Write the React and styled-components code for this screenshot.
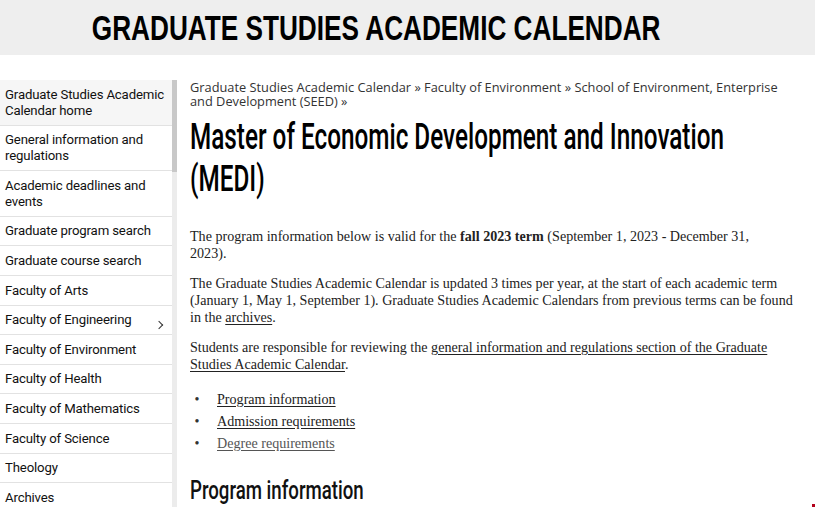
import React from "react";
import styled, { createGlobalStyle } from "styled-components";

const Global = createGlobalStyle`
  html, body { margin: 0; padding: 0; height: 100%; overflow: hidden; background: #fff; }
  body { font-family: "Liberation Serif", serif; color: #222; }
  * { box-sizing: border-box; }
`;

const Header = styled.header`
  height: 55px;
  background: #eeeeee;
  display: flex;
  align-items: center;
  justify-content: center;
  padding-right: 62px;
`;

const SiteTitle = styled.h1`
  margin: 0;
  font-family: "Liberation Sans", Arial, sans-serif;
  font-weight: 700;
  font-size: 35px;
  color: #000;
  transform: scaleX(0.748);
  white-space: nowrap;
`;

const Layout = styled.div`
  display: flex;
  align-items: flex-start;
  margin-top: 25px;
  gap: 13px;
`;

const SideNav = styled.nav`
  display: flex;
  flex: 0 0 177px;
`;

const NavList = styled.ul`
  list-style: none;
  margin: 0;
  padding: 0;
  width: 172px;
`;

const NavItem = styled.li`
  position: relative;
  padding: 6.6px 0 6px 5px;
  border-bottom: 1px solid #e2e2e2;
  background: ${p => (p.$active ? "#f6f6f6" : "#fff")};
  font-family: Roboto, "Liberation Sans", sans-serif;
  font-size: 13.2px;
  letter-spacing: -0.15px;
  line-height: 16px;
  color: #111;
`;

const Chevron = styled.span`
  position: absolute;
  right: 10px;
  top: 16px;
  width: 6px;
  height: 6px;
  border-right: 1.2px solid #333;
  border-bottom: 1.2px solid #333;
  transform: rotate(-45deg);
`;

const Track = styled.div`
  width: 5px;
  align-self: stretch;
  background: #ececec;
  min-height: 440px;
`;

const Thumb = styled.div`
  height: 92px;
  background: #c8c8c8;
`;

const Main = styled.main`
  flex: 1;
  min-width: 0;
  padding-right: 20px;
`;

const Crumbs = styled.div`
  font-family: "Open Sans", "Noto Sans", sans-serif;
  font-size: 12.8px;
  line-height: 14px;
  color: #333;
`;

const Title = styled.h1`
  margin: 8px 0 0 0;
  font-family: Roboto, "Liberation Sans", sans-serif;
  font-weight: 500;
  font-size: 36px;
  line-height: 42px;
  color: #000;
  transform-origin: left top;
  transform: scaleX(0.675);
  white-space: nowrap;
`;

const Para = styled.p`
  margin: ${p => p.$top || 0}px 0 0 0;
  font-size: 14.1px;
  line-height: 17px;
  color: #222;
  max-width: 605px;
`;

const Link = styled.a`
  color: ${p => (p.$visited ? "#555" : "#222")};
  text-decoration: underline;
  text-underline-offset: 2px;
`;

const Bullets = styled.ul`
  margin: 15px 0 0 0;
  padding-left: 27px;
  font-size: 14.1px;
  line-height: 22px;
`;

const Bullet = styled.li`
  &::marker {
    content: "•\\00a0\\00a0\\00a0\\00a0\\00a0";
    color: #333;
  }
`;

const SubHead = styled.h2`
  margin: 23px 0 0 0;
  font-family: Roboto, "Liberation Sans", sans-serif;
  font-weight: 500;
  font-size: 25px;
  line-height: 28px;
  color: #111;
  transform-origin: left top;
  transform: scaleX(0.746);
  white-space: nowrap;
`;

const Corner = styled.div`
  position: fixed;
  right: 0;
  bottom: 0;
  width: 3px;
  height: 3px;
  background: #b3001b;
`;

const navItems = [
  "Graduate Studies Academic Calendar home",
  "General information and regulations",
  "Academic deadlines and events",
  "Graduate program search",
  "Graduate course search",
  "Faculty of Arts",
  "Faculty of Engineering",
  "Faculty of Environment",
  "Faculty of Health",
  "Faculty of Mathematics",
  "Faculty of Science",
  "Theology",
  "Archives",
];

export default function App() {
  return (
    <>
      <Global />
      <Header>
        <SiteTitle>GRADUATE STUDIES ACADEMIC CALENDAR</SiteTitle>
      </Header>
      <Layout>
        <SideNav>
          <NavList>
            {navItems.map((t, i) => (
              <NavItem key={t} $active={i === 0}>
                {t}
                {t === "Faculty of Engineering" && <Chevron />}
              </NavItem>
            ))}
          </NavList>
          <Track>
            <Thumb />
          </Track>
        </SideNav>
        <Main>
          <Crumbs>
            Graduate Studies Academic Calendar » Faculty of Environment » School of Environment, Enterprise
            and Development (SEED) »
          </Crumbs>
          <Title>
            Master of Economic Development and Innovation
            <br />
            (MEDI)
          </Title>
          <Para $top={28}>
            The program information below is valid for the <b>fall 2023 term</b> (September 1, 2023 - December 31,
            <br />
            2023).
          </Para>
          <Para $top={13}>
            The Graduate Studies Academic Calendar is updated 3 times per year, at the start of each academic term
            (January 1, May 1, September 1). Graduate Studies Academic Calendars from previous terms can be found
            in the <Link href="#">archives</Link>.
          </Para>
          <Para $top={13}>
            Students are responsible for reviewing the{" "}
            <Link href="#">general information and regulations section of the Graduate Studies Academic Calendar</Link>.
          </Para>
          <Bullets>
            <Bullet><Link href="#">Program information</Link></Bullet>
            <Bullet><Link href="#">Admission requirements</Link></Bullet>
            <Bullet><Link href="#" $visited>Degree requirements</Link></Bullet>
          </Bullets>
          <SubHead>Program information</SubHead>
        </Main>
      </Layout>
      <Corner />
    </>
  );
}
